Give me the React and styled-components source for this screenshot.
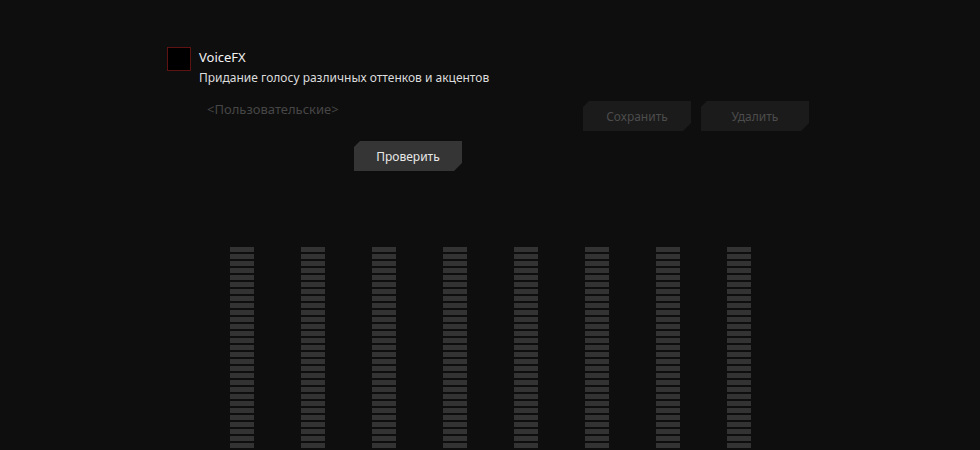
import styled, { createGlobalStyle } from "styled-components";

const GlobalStyle = createGlobalStyle`
  html, body {
    margin: 0;
    padding: 0;
    background: #0e0e0e;
    overflow: hidden;
  }
  body {
    font-family: "Noto Sans", "Open Sans", sans-serif;
  }
`;

const Page = styled.div`
  width: 980px;
  height: 450px;
  overflow: hidden;
  background: #0e0e0e;
  padding-top: 47px;
  box-sizing: border-box;
`;

const Header = styled.div`
  display: flex;
  align-items: flex-start;
  padding-left: 167px;
`;

const Checkbox = styled.div`
  width: 24px;
  height: 24px;
  box-sizing: border-box;
  border: 1px solid #5e1212;
  background: #000;
`;

const HeaderText = styled.div`
  display: flex;
  flex-direction: column;
  margin-left: 8px;
  padding-top: 1px;
`;

const Title = styled.div`
  color: #f2f2f2;
  font-size: 13px;
  line-height: 18px;
`;

const Subtitle = styled.div`
  color: #dcdcdc;
  font-size: 12px;
  line-height: 18px;
  margin-top: 3px;
`;

const PresetRow = styled.div`
  display: flex;
  align-items: flex-start;
  padding-left: 207px;
  margin-top: 13px;
`;

const PresetName = styled.div`
  width: 376px;
  color: #464646;
  font-size: 13px;
  line-height: 18px;
`;

const Actions = styled.div`
  display: flex;
  gap: 10px;
  margin-top: 1px;
`;

const Button = styled.button`
  width: 108px;
  height: 30px;
  border: none;
  padding: 0;
  font-family: inherit;
  font-size: 12px;
  background: ${(p) => (p.$active ? "#353535" : "#1b1b1b")};
  color: ${(p) => (p.$active ? "#e8e8e8" : "#4c4c4c")};
  clip-path: polygon(6px 0, 100% 0, 100% calc(100% - 8px), calc(100% - 8px) 100%, 0 100%, 0 6px);
  cursor: pointer;
`;

const TestRow = styled.div`
  padding-left: 354px;
  margin-top: 10px;
`;

const Meters = styled.div`
  display: flex;
  gap: 47px;
  padding-left: 230px;
  margin-top: 76px;
`;

const Meter = styled.div`
  display: flex;
  flex-direction: column;
  gap: 2px;
  filter: blur(0.5px);
`;

const Segment = styled.div`
  width: 24px;
  height: 5px;
  background: #333333;
`;

const bands = Array.from({ length: 8 });
const segments = Array.from({ length: 30 });

export default function App() {
  return (
    <Page>
      <GlobalStyle />
      <Header>
        <Checkbox />
        <HeaderText>
          <Title>VoiceFX</Title>
          <Subtitle>Придание голосу различных оттенков и акцентов</Subtitle>
        </HeaderText>
      </Header>
      <PresetRow>
        <PresetName>&lt;Пользовательские&gt;</PresetName>
        <Actions>
          <Button>Сохранить</Button>
          <Button>Удалить</Button>
        </Actions>
      </PresetRow>
      <TestRow>
        <Button $active>Проверить</Button>
      </TestRow>
      <Meters>
        {bands.map((_, i) => (
          <Meter key={i}>
            {segments.map((__, j) => (
              <Segment key={j} />
            ))}
          </Meter>
        ))}
      </Meters>
    </Page>
  );
}
